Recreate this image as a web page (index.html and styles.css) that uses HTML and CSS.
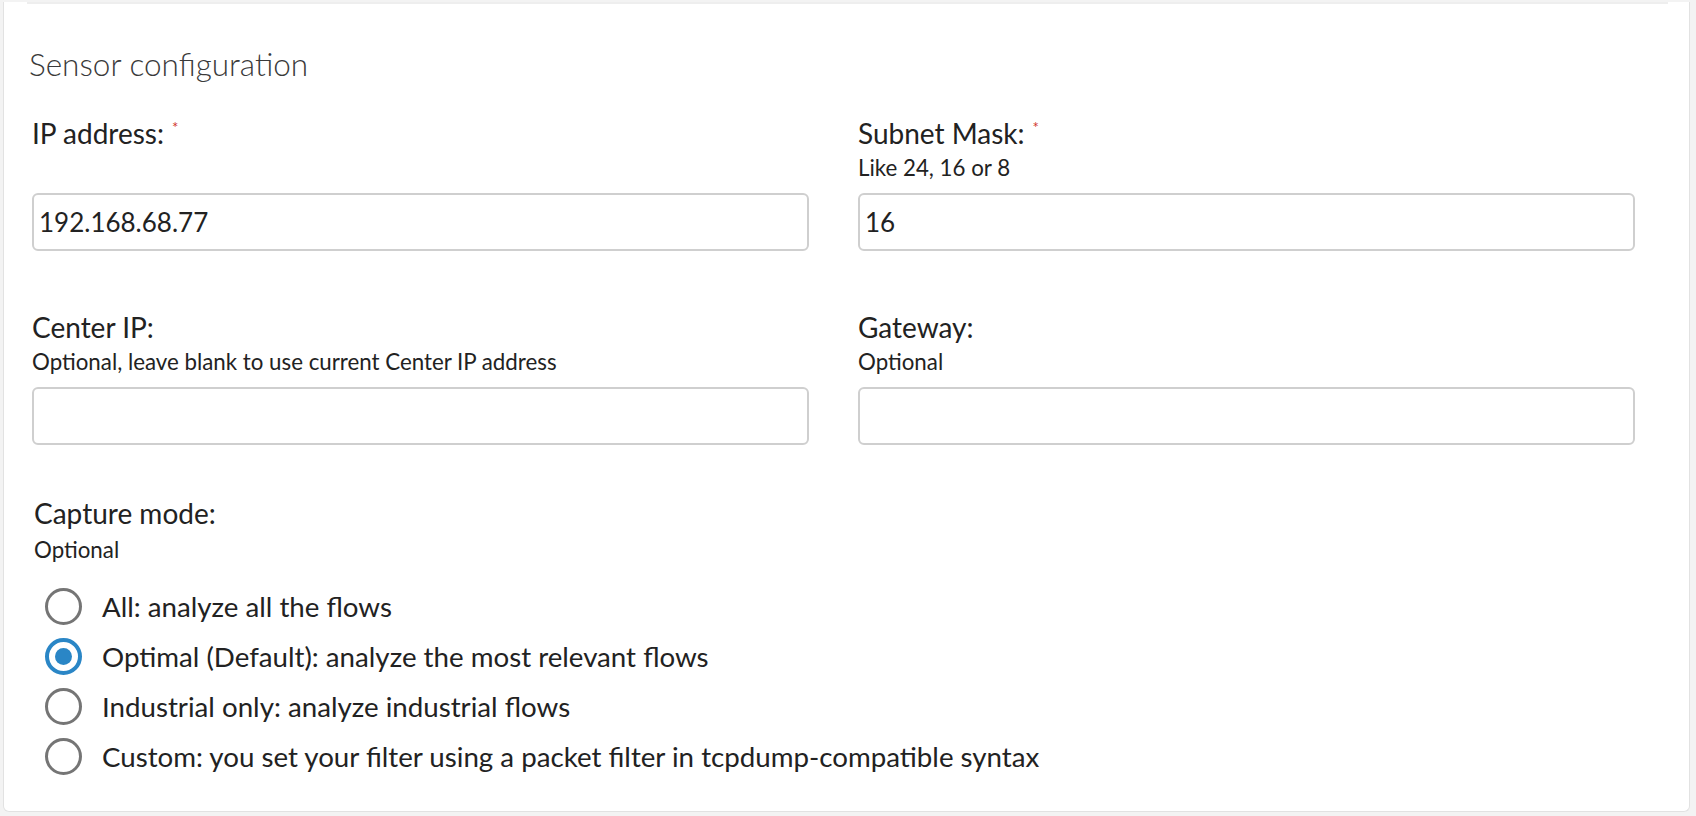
FILE: index.html
```html
<!DOCTYPE html>
<html lang="en">
<head>
  <meta charset="UTF-8" />
  <title>Sensor configuration</title>
  <link rel="stylesheet" href="styles.css">
</head>
<body>

  <div class="panel">
    <div class="divider"></div>

    <h2 class="section-title">Sensor configuration</h2>

    <div class="form-grid">
      <div class="field">
        <label for="ipInput">IP address:<span class="required">*</span></label>
        <div class="help"></div>
        <input type="text" id="ipInput" value="192.168.68.77" />
      </div>
      <div class="field">
        <label for="maskInput">Subnet Mask:<span class="required">*</span></label>
        <div class="help">Like 24, 16 or 8</div>
        <input type="text" id="maskInput" value="16" />
      </div>
      <div class="field">
        <label for="centerInput">Center IP:</label>
        <div class="help">Optional, leave blank to use current Center IP address</div>
        <input type="text" id="centerInput" value="" />
      </div>
      <div class="field">
        <label for="gatewayInput">Gateway:</label>
        <div class="help">Optional</div>
        <input type="text" id="gatewayInput" value="" />
      </div>
    </div>

    <div class="capture">
      <div class="capture-label">Capture mode:</div>
      <div class="help">Optional</div>
      <div class="radio-list" role="radiogroup" aria-label="Capture mode">
        <label class="radio-row">
          <input type="radio" name="capture" value="all" />
          <span class="radio-mark"></span>
          All: analyze all the flows
        </label>
        <label class="radio-row">
          <input type="radio" name="capture" value="optimal" checked />
          <span class="radio-mark"></span>
          Optimal (Default): analyze the most relevant flows
        </label>
        <label class="radio-row">
          <input type="radio" name="capture" value="industrial" />
          <span class="radio-mark"></span>
          Industrial only: analyze industrial flows
        </label>
        <label class="radio-row">
          <input type="radio" name="capture" value="custom" />
          <span class="radio-mark"></span>
          Custom: you set your filter using a packet filter in tcpdump-compatible syntax
        </label>
      </div>
    </div>
  </div>

</body>
</html>
```

FILE: styles.css
```css
html, body {
  margin: 0;
  padding: 0;
  background: #f3f3f3;
  font-family: Lato, "Open Sans", sans-serif;
  color: #222;
}
.panel {
  margin-left: 3px;
  width: 1687px;
  height: 810px;
  box-sizing: border-box;
  background: #fff;
  border: 1px solid #e2e2e2;
  border-top: none;
  border-radius: 0 0 6px 6px;
}
.divider {
  height: 2px;
  margin: 2px 21px 0 23px;
  background: #eeeeee;
}
.section-title {
  margin: 42px 0 0 25px;
  font-size: 31.5px;
  font-weight: 300;
  line-height: 36px;
  color: #3a3a3a;
}
.form-grid {
  display: grid;
  grid-template-columns: 1fr 1fr;
  column-gap: 49px;
  row-gap: 58px;
  margin-top: 33px;
  padding: 0 54px 0 28px;
}
.field label,
.capture-label {
  display: block;
  font-size: 28px;
  line-height: 36px;
}
.required {
  color: #d0342c;
  font-size: 15px;
  vertical-align: top;
  position: relative;
  top: -6px;
  margin-left: 8px;
}
.help {
  font-size: 22.3px;
  line-height: 34px;
  min-height: 34px;
  margin-bottom: 8px;
}
.field input {
  display: block;
  width: 100%;
  height: 58px;
  box-sizing: border-box;
  padding: 0 5px;
  border: 2px solid #cfcfcf;
  border-radius: 6px;
  font-family: inherit;
  font-size: 26px;
  color: #222;
  outline: none;
}
.capture {
  margin-top: 50px;
  padding-left: 30px;
}
.capture .help {
  margin-top: 2px;
}
.radio-list {
  margin-top: 14px;
}
.radio-row {
  display: flex;
  align-items: center;
  gap: 20px;
  height: 50px;
  padding-left: 11px;
  font-size: 27.7px;
  cursor: pointer;
}
.radio-row input {
  display: none;
}
.radio-mark {
  width: 37px;
  height: 37px;
  box-sizing: border-box;
  border: 3.5px solid #757575;
  border-radius: 50%;
  flex-shrink: 0;
  position: relative;
}
.radio-row input:checked + .radio-mark {
  border: 4px solid #2a86c6;
}
.radio-row input:checked + .radio-mark::after {
  content: "";
  position: absolute;
  top: 6px;
  left: 6px;
  width: 17px;
  height: 17px;
  border-radius: 50%;
  background: #2a86c6;
}
```
